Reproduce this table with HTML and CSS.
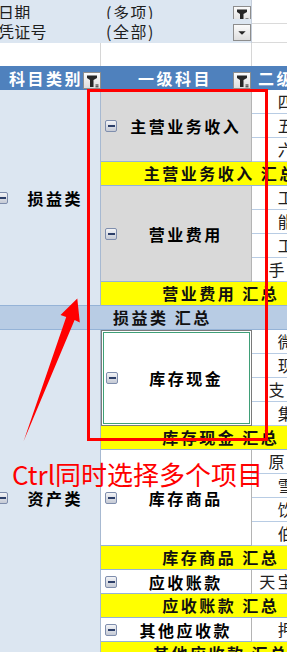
FILE: index.html
```html
<!DOCTYPE html>
<html lang="zh-CN">
<head>
<meta charset="utf-8">
<title>数据透视表</title>
<link rel="stylesheet" href="styles.css">
</head>
<body>
<div class="sheet">
  <div class="row f1">
    <div class="fa"><span class="ftxt">日期</span></div>
    <div class="fb"><span class="fval">(多项)</span>
      <svg class="btn btn-top" viewBox="0 0 16 15"><path d="M3 2.5H13V5L9.5 7V14H6V7L3 5Z" fill="#262626"/><rect x="11.5" y="11.5" width="3" height="1" fill="#262626"/><rect x="11.5" y="13.3" width="3" height="1" fill="#262626"/></svg>
    </div>
    <div class="fc"></div>
  </div>
  <div class="row f2">
    <div class="fa"><span class="ftxt">凭证号</span></div>
    <div class="fb"><span class="fval">(全部)</span>
      <svg class="btn btn-drop" viewBox="0 0 16 15"><polygon points="4.3,6.3 11.7,6.3 8,9.8" fill="#262626"/></svg>
    </div>
    <div class="fc"></div>
  </div>
  <div class="row f3">
    <div class="ba"></div>
    <div class="bb"></div>
    <div class="bc"></div>
  </div>
  <div class="row head">
    <div class="ha"><span>科目类别</span>
      <svg class="btn" viewBox="0 0 16 15"><path d="M3 2.5H13V5L9.5 7V14H6V7L3 5Z" fill="#262626"/><rect x="11.5" y="11.5" width="3" height="1" fill="#262626"/><rect x="11.5" y="13.3" width="3" height="1" fill="#262626"/></svg>
    </div>
    <div class="hb"><span>一级科目</span>
      <svg class="btn" viewBox="0 0 16 15"><path d="M3 2.5H13V5L9.5 7V14H6V7L3 5Z" fill="#262626"/><rect x="11.5" y="11.5" width="3" height="1" fill="#262626"/><rect x="11.5" y="13.3" width="3" height="1" fill="#262626"/></svg>
    </div>
    <div class="hc"><span>二级科目</span></div>
  </div>

  <div class="pivot">
    <div class="ca span9"><span class="minus"></span><span class="lbl">损益类</span></div>
    <div class="cb gray span3"><span class="minus"></span><span class="lbl">主营业务收入</span></div>
    <div class="cc">四川</div>
    <div class="cc">五金</div>
    <div class="cc">六安</div>
    <div class="sub">主营业务收入 汇总</div>
    <div class="cb gray span4"><span class="minus"></span><span class="lbl">营业费用</span></div>
    <div class="cc">工资</div>
    <div class="cc">能源</div>
    <div class="cc">工会</div>
    <div class="cc">手续费</div>
    <div class="sub">营业费用 汇总</div>
    <div class="total">损益类 汇总</div>
    <div class="ca span14"><span class="minus"></span><span class="lbl">资产类</span></div>
    <div class="cb sel span4"><span class="minus"></span><span class="lbl">库存现金</span></div>
    <div class="cc">微信</div>
    <div class="cc">现金</div>
    <div class="cc">支付宝</div>
    <div class="cc">集团</div>
    <div class="sub">库存现金 汇总</div>
    <div class="cb span4"><span class="minus"></span><span class="lbl">库存商品</span></div>
    <div class="cc">原材料</div>
    <div class="cc">雪花</div>
    <div class="cc">饮料</div>
    <div class="cc">伯爵</div>
    <div class="sub">库存商品 汇总</div>
    <div class="cb"><span class="minus"></span><span class="lbl">应收账款</span></div>
    <div class="cc">天宝公司</div>
    <div class="sub">应收账款 汇总</div>
    <div class="cb"><span class="minus"></span><span class="lbl">其他应收款</span></div>
    <div class="cc">押金</div>
    <div class="sub">其他应收款 汇总</div>
  </div>

  <div class="ann-box"></div>
  <svg class="ann-arrow" viewBox="0 0 287 652">
    <polygon points="77.3,298.5 79.8,322.5 74.6,320 23.5,441.5 66.2,317 60.5,315" fill="#ff0000"/>
  </svg>
  <div class="ann-text">Ctrl同时选择多个项目</div>
</div>
</body>
</html>
```
FILE: styles.css
```css
* { box-sizing: border-box; }
html, body { margin: 0; padding: 0; background: #fff; }
body { font-family: "Noto Sans CJK SC", "Noto Sans", sans-serif; color: #111; }

.sheet { position: relative; width: 287px; height: 652px; overflow: hidden; background: #fff; }

.row { display: grid; grid-template-columns: 101px 151px 86px; width: 338px; }
.f1 { height: 19px; }
.f2 { height: 24px; }
.f3 { height: 23px; }

.fa, .fb { background: #dce6f1; display: flex; align-items: center; font-size: 16px; color: #1e1e1e; }
.ftxt { margin-left: -2px; letter-spacing: 0.3px; }
.fb { padding-left: 5px; border-right: 1px solid #c5cedb; }
.fval { letter-spacing: 1.5px; }
.fc { border-bottom: 1px solid #dadada; }
.f2 .fc { border-bottom: 1px solid #dadada; }

.btn {
  display: block; flex: none; width: 18px; height: 17px;
  border: 1px solid #8d8d8d;
  background: linear-gradient(#fbfbfb, #dedede);
}
.fb .btn { margin-left: auto; }
.btn-top { align-self: flex-end; margin-bottom: 1px; }
.btn-drop { align-self: flex-start; margin-top: 5px; }

.ba { border-right: 1px solid #d6d6d6; }
.bb { border-right: 1px solid #d6d6d6; }
.bc { }

.head { height: 24px; background: #4f81bd; color: #fff; font-size: 16px; font-weight: bold; letter-spacing: 2.5px; }
.ha, .hb, .hc { display: flex; align-items: center; white-space: nowrap; overflow: hidden; }
.ha { padding-left: 9px; }
.hb { padding-left: 37px; }
.hc { padding-left: 6px; }
.ha .btn, .hb .btn { margin-left: auto; margin-right: 1px; align-self: flex-start; margin-top: 6px; }

.pivot {
  display: grid;
  grid-template-columns: 101px 151px 86px;
  grid-auto-rows: 24px;
  width: 338px;
  font-size: 16px;
}

.ca {
  grid-column: 1; background: #dce6f1;
  border-right: 1px solid #a7b9d1; border-bottom: 1px solid #95b3d7;
  display: flex; align-items: center;
}
.cb {
  grid-column: 2; background: #fff;
  border-right: 1px solid #b4b4b4; border-bottom: 1px solid #95b3d7;
  display: flex; align-items: center;
}
.cb.gray { background: #d9d9d9; }
.cb.sel {
  border: 1px solid #7a7a7a;
  box-shadow: inset 0 0 0 1px #fff, inset 0 0 0 2px #3f9f78;
}
.cc {
  grid-column: 3; border-bottom: 1px solid #b8cce4;
  text-align: center; line-height: 23px; white-space: nowrap; overflow: hidden;
  color: #222; letter-spacing: 2.5px; padding-left: 2.5px;
}
.sub {
  grid-column: 2 / span 2; background: #ffff00; border-bottom: 1px solid #95b3d7;
  text-align: center; font-weight: bold; line-height: 23px;
  letter-spacing: 2.5px; padding-left: 2.5px; white-space: nowrap;
}
.total {
  grid-column: 1 / -1; background: #b8cce4; border-bottom: 1px solid #95b3d7;
  font-weight: bold; padding-left: 113px; line-height: 23px; letter-spacing: 2.5px; white-space: nowrap;
}
.span3 { grid-row: span 3; }
.span4 { grid-row: span 4; }
.span9 { grid-row: span 9; }
.span14 { grid-row: span 14; }

.lbl { flex: 1; text-align: center; font-weight: bold; letter-spacing: 2.5px; padding-left: 2.5px; white-space: nowrap; color: #000; }

.minus {
  flex: none; width: 12px; height: 12px;
  border: 1px solid #7f8ead; border-radius: 2px;
  background: linear-gradient(#f3f4f7, #c5cad5);
  display: flex; align-items: center; justify-content: center;
}
.minus::after { content: ""; width: 7px; height: 2px; background: #2d3f69; }
.cb .minus { margin-left: 4px; margin-right: 1px; }
.ca .minus { margin-left: -4px; }

.ann-box {
  position: absolute; left: 87px; top: 89px; width: 181px; height: 352px;
  border: 3px solid #ff0000;
}
.ann-arrow { position: absolute; left: 0; top: 0; width: 287px; height: 652px; }
.ann-text {
  position: absolute; left: 12px; top: 461px;
  font-family: "Noto Sans CJK SC", sans-serif;
  font-size: 26px; line-height: 26px; color: #ff0000; white-space: nowrap;
}
```
